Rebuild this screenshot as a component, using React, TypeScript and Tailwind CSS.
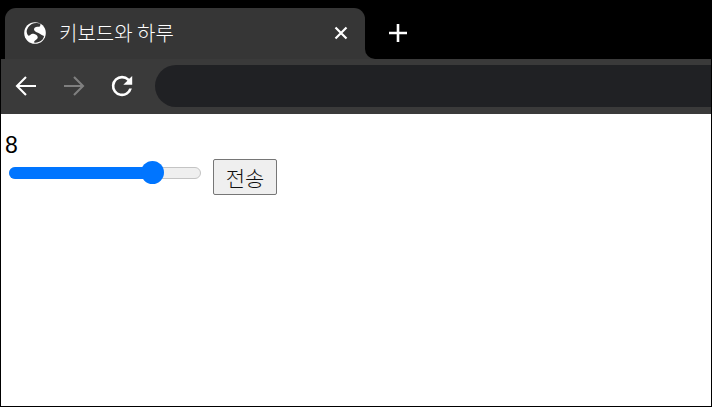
export default function App() {
  return (
    <div className="h-[407px] w-[712px] overflow-hidden border-x border-b border-black bg-white font-['Liberation_Sans',sans-serif] text-black">
      <div className="relative flex h-[59px] items-start bg-black pl-1 pt-2">
        <div className="relative flex h-[51px] w-[360px] items-center rounded-t-[11px] bg-[#363636] pb-[2px] pl-[18px] text-white">
          <svg viewBox="0 0 24 24" className="h-[24px] w-[24px]">
            <circle cx="12" cy="12" r="10.8" fill="#fff" />
            <path fill="#363636" d="M15 2.2C11 1.6 7.4 3.2 5.2 6.2 4 8 3.4 10 3.8 11.4c.4 2.2 1.4 3.6 2.6 3.2 1.2-.4 1.6-1.8 3-1.8 1.8 0 3.6.6 4.6 1.8.9 1.2 1 2.4.2 3.2-1 1-2.6 1.4-3.4 3.8 3 .4 5.4-.4 7.6-2 1.4-1.2 2.4-2.8 2.6-4.6-1.4-.6-3-1.2-4.6-2.4-1.8-1-4-1.4-5-3-.6-1-.4-2.6.6-3.2 1.2-.8 3.4-.4 4.8-.8.6-.2.6-2 .6-3Z" />
          </svg>
          <span className="ml-[12px] whitespace-nowrap font-['Noto_Sans_CJK_KR',sans-serif] text-[20px] font-light leading-none">키보드와 하루</span>
          <svg viewBox="0 0 14 14" className="absolute left-[329px] top-[18px] h-[14px] w-[14px]" stroke="#fff" strokeWidth="2.2" fill="none">
            <path d="M1.5 1.5 12.5 12.5M12.5 1.5 1.5 12.5" />
          </svg>
          <div className="absolute bottom-0 left-full h-[10px] w-[12px] bg-[#363636]">
            <div className="h-full w-full rounded-bl-[11px] bg-black" />
          </div>
        </div>
        <svg viewBox="0 0 20 20" className="ml-[23px] mt-[15px] h-[20px] w-[20px]" stroke="#fff" strokeWidth="2.6" fill="none">
          <path d="M10 1v18M1 10h18" />
        </svg>
      </div>
      <div className="flex h-[55px] items-center bg-[#3a3a3a] pb-[1px]">
        <svg viewBox="0 0 24 24" className="ml-[13px] h-[24px] w-[24px]" stroke="#fff" strokeWidth="2.1" fill="none">
          <path d="M22 12H3M12 3l-9 9 9 9" />
        </svg>
        <svg viewBox="0 0 24 24" className="ml-[24px] h-[24px] w-[24px]" stroke="#7f7f7f" strokeWidth="2.1" fill="none">
          <path d="M2 12h19M12 3l9 9-9 9" />
        </svg>
        <svg viewBox="0 0 24 24" className="ml-[24px] h-[24px] w-[24px]" fill="#fff">
          <path d="M19.2 4.8A10.1 10.1 0 0 0 12 1.8a10.2 10.2 0 1 0 9.9 12.7h-2.7A7.6 7.6 0 1 1 12 4.4c2.1 0 4 .9 5.4 2.3L13.3 10.8h8.9V1.9l-3 2.9Z" />
        </svg>
        <div className="ml-[21px] h-[42px] flex-1 rounded-l-[21px] bg-[#202124]" />
      </div>
      <div className="pl-1 pt-[18px]">
        <div className="text-[23px] leading-[27px]">8</div>
        <div className="flex h-[36px] items-start">
          <div className="relative ml-[4px] mt-[8px] h-[12px] w-[192px] rounded-full border border-[#c4c4c4] bg-[#efefef]">
            <div className="absolute -inset-px right-[49px] rounded-full bg-[#0075ff]" />
            <div className="absolute left-[131px] top-[-7px] h-[23px] w-[23px] rounded-full bg-[#0075ff]" />
          </div>
          <button className="ml-[12px] h-[36px] w-[64px] rounded-[2px] border border-[#767676] bg-[#efefef] font-['Noto_Sans_CJK_KR',sans-serif] text-[21px] font-light leading-none text-[#111]">전송</button>
        </div>
      </div>
    </div>
  );
}
